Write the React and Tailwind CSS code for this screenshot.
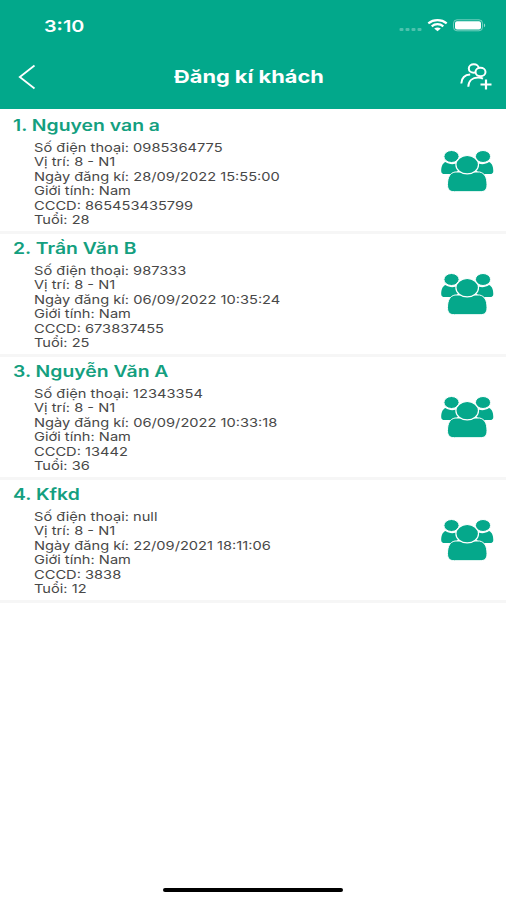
const guests = [
  { name: 'Nguyen van a', phone: '0985364775', place: '8 - N1', date: '28/09/2022 15:55:00', gender: 'Nam', cccd: '865453435799', age: 28 },
  { name: 'Trần Văn B', phone: '987333', place: '8 - N1', date: '06/09/2022 10:35:24', gender: 'Nam', cccd: '673837455', age: 25 },
  { name: 'Nguyễn Văn A', phone: '12343354', place: '8 - N1', date: '06/09/2022 10:33:18', gender: 'Nam', cccd: '13442', age: 36 },
  { name: 'Kfkd', phone: 'null', place: '8 - N1', date: '22/09/2021 18:11:06', gender: 'Nam', cccd: '3838', age: 12 },
];

function GroupIcon() {
  return (
    <svg width="54" height="42" viewBox="-.5 -.5 54 42" fill="#05a88b" className="shrink-0">
      <path d="M5 11.500C1.800 12.800 .7 16.500 .7 20.500C.7 22.700 2 23.600 4 23.600H13L18 20V12C13.500 14.500 8.500 14 5 11.500Z" />
      <path d="M48.500 11.500C51.700 12.800 52.800 16.500 52.800 20.500C52.800 22.700 51.500 23.600 49.500 23.600H40.500L35.500 20V12C40 14.500 45 14 48.500 11.500Z" />
      <ellipse cx="11" cy="6" rx="7.600" ry="6" stroke="#fff" />
      <ellipse cx="42.500" cy="6" rx="7.600" ry="6" stroke="#fff" />
      <path
        d="M14.500 21.500C9.300 22.500 7 27 7 34C7 39.200 9 41.200 14 41.200H39.500C44.500 41.200 46.500 39.200 46.500 34C46.500 27 44.200 22.500 39 21.500Z"
        stroke="#fff"
      />
      <ellipse cx="26.700" cy="14.200" rx="11.300" ry="9.200" stroke="#fff" strokeWidth="1.200" />
    </svg>
  );
}

function StatusBar() {
  return (
    <div className="flex h-[50px] items-center justify-between pl-11 pr-5 pt-0.5">
      <span className="origin-left scale-x-[1.200] text-[16.500px] font-semibold leading-none">3:10</span>
      <svg width="88" height="16" viewBox="0 0 88 16" fill="none">
        <g fill="#fff" fillOpacity=".3">
          <rect x="1.500" y="10" width="4" height="3" rx="1" />
          <rect x="7.500" y="10" width="4" height="3" rx="1" />
          <rect x="13.500" y="10" width="4" height="3" rx="1" />
          <rect x="19.500" y="10" width="4" height="3" rx="1" />
        </g>
        <g stroke="#fff" strokeWidth="2.200">
          <path d="M30.300 5.300C35.500 1 43.500 1 48.700 5.300" />
          <path d="M33.700 8.300C37 5.500 42 5.500 45.300 8.300" />
        </g>
        <path d="M36.200 10.600C38 9 41 9 42.800 10.600L39.500 13.200Z" fill="#fff" />
        <rect x="55.500" y="1.800" width="29" height="11" rx="3.500" stroke="#fff" strokeOpacity=".45" />
        <rect x="57" y="3.200" width="26" height="8.200" rx="2" fill="#fff" />
        <path d="M86 5.500C87.600 6.200 87.600 8.500 86 9.200Z" fill="#fff" fillOpacity=".6" />
      </svg>
    </div>
  );
}

function Header() {
  return (
    <header className="h-[109px] bg-[#02a88b] text-white">
      <StatusBar />
      <div className="flex h-[54px] items-center pl-[18px] pr-[13px]">
        <button aria-label="Quay lại">
          <svg width="18" height="26" viewBox="0 0 18 26" fill="none" stroke="#fff" strokeWidth="1.800">
            <path d="M16.500 1.500L1.800 13L16.500 24.500" />
          </svg>
        </button>
        <h1 className="flex-1 pl-[3px] text-center">
          <span className="inline-block scale-x-[1.210] whitespace-nowrap text-[18px] font-bold leading-none">Đăng kí khách</span>
        </h1>
        <button aria-label="Thêm khách">
          <svg width="34" height="28" viewBox="0 0 34 28" fill="none" stroke="#fff" strokeWidth="2">
            <ellipse cx="14.800" cy="5.500" rx="5" ry="4.200" />
            <ellipse cx="21.500" cy="9" rx="5" ry="4.200" fill="#02a88b" />
            <path d="M2.300 20.500C2.700 15 5.800 11.800 11.200 11.600" />
            <path d="M9.300 23.800C9.500 18 13.500 14.600 19 14.600C20.900 14.600 22.500 15 24 15.700" />
            <path d="M27 16.500V26.500M21.500 21.500H32.500" strokeWidth="2.200" />
          </svg>
        </button>
      </div>
    </header>
  );
}

function GuestItem({ guest, index }) {
  return (
    <li className="flex h-[123px] items-center justify-between border-b-[3px] border-[#f6f6f6] pl-[13px] pr-3">
      <div className="h-full whitespace-nowrap pt-[5px]">
        <h2 className="w-fit origin-left scale-x-[1.250] text-[15.500px] font-semibold leading-5 text-[#149f7f]">
          {index + 1}. {guest.name}
        </h2>
        <div className="ml-[21px] mt-[4.500px] w-fit origin-left scale-x-[1.220] text-[12px] leading-[14.600px] text-[#484848]">
          <p>Số điện thoại: {guest.phone}</p>
          <p>Vị trí: {guest.place}</p>
          <p>Ngày đăng kí: {guest.date}</p>
          <p>Giới tính: {guest.gender}</p>
          <p>CCCD: {guest.cccd}</p>
          <p>Tuổi: {guest.age}</p>
        </div>
      </div>
      <GroupIcon />
    </li>
  );
}

export default function App() {
  return (
    <div className="flex h-[900px] w-[506px] flex-col overflow-hidden bg-white font-['Inter','Liberation_Sans',sans-serif]">
      <Header />
      <ul className="flex-1 pt-[2px]">
        {guests.map((guest, i) => (
          <GuestItem key={guest.name} guest={guest} index={i} />
        ))}
      </ul>
      <div className="mb-2 h-1 w-[180px] self-center rounded-full bg-black" />
    </div>
  );
}
